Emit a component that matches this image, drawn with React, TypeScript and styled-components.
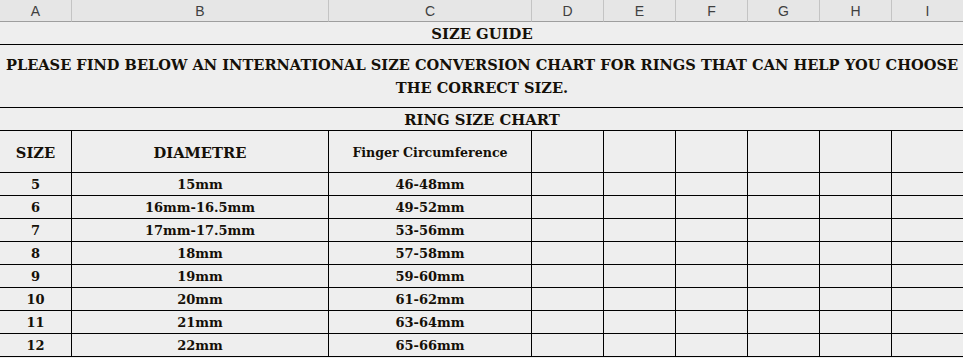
import React from 'react';
import styled, { createGlobalStyle } from 'styled-components';

const GlobalStyle = createGlobalStyle`
  html, body {
    margin: 0;
    padding: 0;
    background: #eeeeee;
    overflow: hidden;
  }
`;

const columns = ['A', 'B', 'C', 'D', 'E', 'F', 'G', 'H', 'I'];

const rings = [
  { size: '5', diameter: '15mm', circumference: '46-48mm' },
  { size: '6', diameter: '16mm-16.5mm', circumference: '49-52mm' },
  { size: '7', diameter: '17mm-17.5mm', circumference: '53-56mm' },
  { size: '8', diameter: '18mm', circumference: '57-58mm' },
  { size: '9', diameter: '19mm', circumference: '59-60mm' },
  { size: '10', diameter: '20mm', circumference: '61-62mm' },
  { size: '11', diameter: '21mm', circumference: '63-64mm' },
  { size: '12', diameter: '22mm', circumference: '65-66mm' },
];

const App: React.FC = () => {
  return (
    <>
      <GlobalStyle />
      <Sheet>
        {columns.map((col) => (
          <ColHeader key={col}>{col}</ColHeader>
        ))}

        <MergedCell $height={23}>SIZE GUIDE</MergedCell>
        <MergedCell $height={63} $size={14.6}>
          PLEASE FIND BELOW AN INTERNATIONAL SIZE CONVERSION CHART FOR RINGS THAT CAN HELP YOU CHOOSE
          <br />
          THE CORRECT SIZE.
        </MergedCell>
        <MergedCell $height={23}>RING SIZE CHART</MergedCell>

        <Cell $height={42} $size={14.7}>SIZE</Cell>
        <Cell $height={42} $size={14.7}>DIAMETRE</Cell>
        <Cell $height={42} $size={12.6}>Finger Circumference</Cell>
        {columns.slice(3).map((col) => (
          <Cell key={col} $height={42} />
        ))}

        {rings.map((ring) => (
          <React.Fragment key={ring.size}>
            <Cell>{ring.size}</Cell>
            <Cell>{ring.diameter}</Cell>
            <Cell>{ring.circumference}</Cell>
            {columns.slice(3).map((col) => (
              <Cell key={col} />
            ))}
          </React.Fragment>
        ))}
      </Sheet>
    </>
  );
};

const Sheet = styled.div`
  display: grid;
  grid-template-columns: 72px 257px 203px repeat(6, 72px);
  width: 964px;
  background: #eeeeee;
  font-family: 'DejaVu Serif', 'Liberation Serif', serif;
  font-weight: bold;
  color: #151008;
`;

const ColHeader = styled.div`
  box-sizing: border-box;
  height: 22px;
  display: flex;
  align-items: center;
  justify-content: center;
  background: #e6e6e6;
  border-right: 1px solid #c4c4c4;
  border-bottom: 1px solid #9e9e9e;
  font-family: 'Liberation Sans', Arial, sans-serif;
  font-weight: normal;
  font-size: 14px;
  color: #404040;
  padding-top: 1px;
`;

const MergedCell = styled.div<{ $height: number; $size?: number }>`
  grid-column: 1 / -1;
  box-sizing: border-box;
  height: ${(p) => p.$height}px;
  display: flex;
  align-items: center;
  justify-content: center;
  text-align: center;
  border-bottom: 1px solid #000;
  font-size: ${(p) => p.$size ?? 14.8}px;
  line-height: 23px;
  white-space: nowrap;
`;

const Cell = styled.div<{ $height?: number; $size?: number }>`
  box-sizing: border-box;
  height: ${(p) => p.$height ?? 23}px;
  display: flex;
  align-items: center;
  justify-content: center;
  border-right: 1px solid #000;
  border-bottom: 1px solid #000;
  font-size: ${(p) => p.$size ?? 13}px;
  white-space: nowrap;
  padding-top: 1px;
`;

export default App;
